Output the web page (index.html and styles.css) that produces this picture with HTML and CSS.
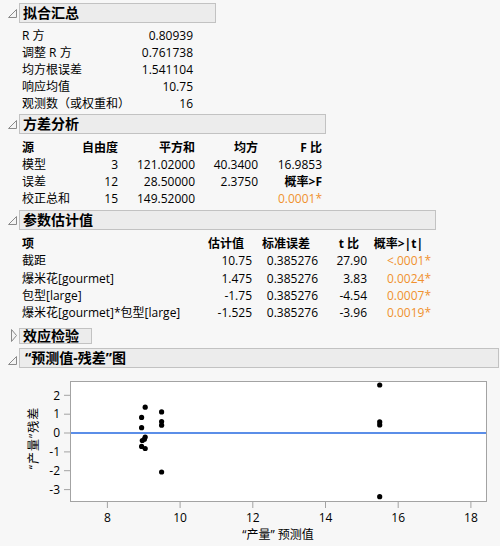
FILE: index.html
```html
<!DOCTYPE html>
<html>
<head>
<meta charset="utf-8">
<link rel="stylesheet" href="styles.css">
</head>
<body>
<div class="report">

  <section class="outline s1">
    <div class="ohead">
      <svg class="tri" width="19" height="20" viewBox="0 0 19 20"><polygon points="8.5,14.5 16.5,14.5 16.5,6.5" class="tri-open"/></svg>
      <div class="otitle w1">拟合汇总</div>
    </div>
    <div class="grid g1">
      <div>R 方</div><div class="num">0.80939</div>
      <div>调整 R 方</div><div class="num">0.761738</div>
      <div>均方根误差</div><div class="num">1.541104</div>
      <div>响应均值</div><div class="num">10.75</div>
      <div>观测数（或权重和）</div><div class="num">16</div>
    </div>
  </section>

  <section class="outline s2">
    <div class="ohead">
      <svg class="tri" width="19" height="20" viewBox="0 0 19 20"><polygon points="8.5,14.5 16.5,14.5 16.5,6.5" class="tri-open"/></svg>
      <div class="otitle w2">方差分析</div>
    </div>
    <div class="grid g2">
      <div class="hd">源</div><div class="hd num">自由度</div><div class="hd num">平方和</div><div class="hd num">均方</div><div class="hd num">F 比</div>
      <div>模型</div><div class="num">3</div><div class="num">121.02000</div><div class="num">40.3400</div><div class="num">16.9853</div>
      <div>误差</div><div class="num">12</div><div class="num">28.50000</div><div class="num">2.3750</div><div class="hd num">概率&gt;F</div>
      <div>校正总和</div><div class="num">15</div><div class="num">149.52000</div><div></div><div class="num sig">0.0001*</div>
    </div>
  </section>

  <section class="outline s3">
    <div class="ohead">
      <svg class="tri" width="19" height="20" viewBox="0 0 19 20"><polygon points="8.5,14.5 16.5,14.5 16.5,6.5" class="tri-open"/></svg>
      <div class="otitle w3">参数估计值</div>
    </div>
    <div class="grid g3">
      <div class="hd">项</div><div class="hd num ph">估计值</div><div class="hd num ph">标准误差</div><div class="hd num ph">t 比</div><div class="hd num ph">概率&gt;|t|</div>
      <div>截距</div><div class="num">10.75</div><div class="num">0.385276</div><div class="num">27.90</div><div class="num sig">&lt;.0001*</div>
      <div>爆米花[gourmet]</div><div class="num">1.475</div><div class="num">0.385276</div><div class="num">3.83</div><div class="num sig">0.0024*</div>
      <div>包型[large]</div><div class="num">-1.75</div><div class="num">0.385276</div><div class="num">-4.54</div><div class="num sig">0.0007*</div>
      <div>爆米花[gourmet]*包型[large]</div><div class="num">-1.525</div><div class="num">0.385276</div><div class="num">-3.96</div><div class="num sig">0.0019*</div>
    </div>
  </section>

  <section class="outline s4">
    <div class="ohead short">
      <svg class="tri" width="19" height="16" viewBox="0 0 19 16"><polygon points="11.5,1.5 16.5,7.5 11.5,13.5" class="tri-closed"/></svg>
      <div class="otitle w4">效应检验</div>
    </div>
  </section>

  <section class="outline s5">
    <div class="ohead">
      <svg class="tri" width="19" height="20" viewBox="0 0 19 20"><polygon points="8.5,16.5 16.5,16.5 16.5,8.5" class="tri-open"/></svg>
      <div class="otitle w5">“预测值-残差”图</div>
    </div>
    <svg class="plot" width="500" height="178" viewBox="0 368 500 178">
      <rect x="70.5" y="381.5" width="416" height="120" class="frame-bg"/>
      <line x1="70.7" y1="433" x2="486" y2="433" class="ref"/>
      <g class="pts">
        <circle cx="141.6" cy="417.4" r="2.6"/>
        <circle cx="141.6" cy="427.7" r="2.6"/>
        <circle cx="142.3" cy="440.5" r="2.6"/>
        <circle cx="141.6" cy="446.4" r="2.6"/>
        <circle cx="145.2" cy="407.2" r="2.6"/>
        <circle cx="145.2" cy="437.1" r="2.6"/>
        <circle cx="144.4" cy="439.2" r="2.6"/>
        <circle cx="145.2" cy="448.5" r="2.6"/>
        <circle cx="161.6" cy="411.9" r="2.6"/>
        <circle cx="161.6" cy="421.5" r="2.6"/>
        <circle cx="161.6" cy="425.2" r="2.6"/>
        <circle cx="161.6" cy="472" r="2.6"/>
        <circle cx="379.7" cy="385" r="2.6"/>
        <circle cx="379.7" cy="421.9" r="2.6"/>
        <circle cx="379.7" cy="424.9" r="2.6"/>
        <circle cx="379.7" cy="496.7" r="2.6"/>
      </g>
      <rect x="70.5" y="381.5" width="416" height="120" class="frame"/>
      <g class="ticks">
        <line x1="64" y1="395.3" x2="70" y2="395.3"/>
        <line x1="64" y1="414.2" x2="70" y2="414.2"/>
        <line x1="64" y1="433" x2="70" y2="433"/>
        <line x1="64" y1="451.9" x2="70" y2="451.9"/>
        <line x1="64" y1="470.7" x2="70" y2="470.7"/>
        <line x1="64" y1="489.6" x2="70" y2="489.6"/>
        <line x1="107.4" y1="502" x2="107.4" y2="508"/>
        <line x1="180.1" y1="502" x2="180.1" y2="508"/>
        <line x1="252.8" y1="502" x2="252.8" y2="508"/>
        <line x1="325.5" y1="502" x2="325.5" y2="508"/>
        <line x1="398.2" y1="502" x2="398.2" y2="508"/>
        <line x1="470.9" y1="502" x2="470.9" y2="508"/>
      </g>
      <g class="ylab">
        <text x="60" y="399.5">2</text>
        <text x="60" y="418.4">1</text>
        <text x="60" y="437.2">0</text>
        <text x="60" y="456.1">-1</text>
        <text x="60" y="474.9">-2</text>
        <text x="60" y="493.8">-3</text>
      </g>
      <g class="xlab">
        <text x="107.4" y="521.5">8</text>
        <text x="180.1" y="521.5">10</text>
        <text x="252.8" y="521.5">12</text>
        <text x="325.5" y="521.5">14</text>
        <text x="398.2" y="521.5">16</text>
        <text x="470.9" y="521.5">18</text>
      </g>
      <text class="axtitle" x="278" y="538.5">“产量” 预测值</text>
      <text class="axtitle ytitle" transform="translate(37.5,438) rotate(-90)" x="0" y="0">“产量”残差</text>
    </svg>
  </section>

</div>
</body>
</html>
```

FILE: styles.css
```css
html, body {
  margin: 0;
  padding: 0;
  background: #f7f7f7;
}
body {
  width: 500px;
  height: 546px;
  overflow: hidden;
  font-family: "Open Sans", "Noto Sans CJK SC", sans-serif;
  font-size: 12px;
  color: #000;
}
.report {
  display: flex;
  flex-direction: column;
}
.outline {
  display: flex;
  flex-direction: column;
}
.s1 { margin-top: 3px; }
.s2 { margin-top: 2px; }
.s3 { margin-top: 3px; }
.s4 { margin-top: 7px; }
.s5 { margin-top: 4px; }

.ohead {
  display: flex;
  height: 20px;
}
.ohead.short { height: 16px; }
.tri { flex: none; display: block; }
.tri-open {
  fill: #f4f4f4;
  stroke: #8a8a8a;
  stroke-width: 1;
}
.tri-closed {
  fill: #f4f4f4;
  stroke: #8a8a8a;
  stroke-width: 1;
}
.otitle {
  box-sizing: border-box;
  height: 100%;
  background: #ececec;
  border: 1px solid #c2c2c2;
  font-weight: bold;
  font-size: 14px;
  line-height: 18px;
  padding-left: 3px;
  white-space: nowrap;
}
.short .otitle { line-height: 14px; }
.w1 { width: 197px; }
.w2 { width: 307px; }
.w3 { width: 417px; }
.w4 { width: 73px; }
.w5 { width: 480px; padding-left: 5px; }

.grid {
  display: grid;
  margin-left: 22px;
  line-height: 17px;
  white-space: nowrap;
}
.g1 { grid-template-columns: 110px 61px; margin-top: 4px; }
.g2 { grid-template-columns: 60px 36px 77px 63px 64px; margin-top: 5px; }
.g3 { grid-template-columns: 178px 52px 66px 49px 64px; margin-top: 5px; line-height: 17.25px; }
.num { text-align: right; }
.hd { font-weight: bold; }
.ph { padding-right: 8px; }
.sig { color: #f0912e; }

.plot { display: block; margin-top: 0; }
.frame-bg { fill: #ffffff; }
.frame { fill: none; stroke: #a3a3a3; stroke-width: 1; }
.ref { stroke: #5b8ee8; stroke-width: 2; }
.pts circle { fill: #000; }
.ticks line { stroke: #a3a3a3; stroke-width: 1; }
.plot text {
  font-family: "Open Sans", "Noto Sans CJK SC", sans-serif;
  font-size: 12px;
  fill: #000;
}
.ylab text { text-anchor: end; }
.xlab text { text-anchor: middle; }
.plot .axtitle { text-anchor: middle; font-size: 12px; }
.plot .ytitle { letter-spacing: 1px; }
```
